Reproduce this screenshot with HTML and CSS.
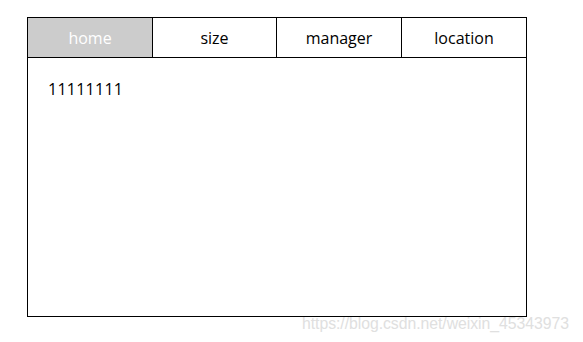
FILE: index.html
```html
<!DOCTYPE html>
<html>
<head>
<meta charset="utf-8">
<link rel="stylesheet" href="styles.css">
</head>
<body>
<div class="box">
  <div class="tabs">
    <div class="tab active">home</div>
    <div class="tab narrow">size</div>
    <div class="tab">manager</div>
    <div class="tab">location</div>
  </div>
  <div class="panel">11111111</div>
</div>
<div class="watermark">https://blog.csdn.net/weixin_45343973</div>
</body>
</html>
```
FILE: styles.css
```css
html, body {
  margin: 0;
  padding: 0;
  background: #fff;
}
body {
  position: relative;
  width: 583px;
  height: 342px;
  font-family: "Open Sans", "Noto Sans", sans-serif;
  color: #000;
}
.box {
  position: relative;
  top: 17px;
  left: 27px;
  width: 498px;
  height: 298px;
  border: 1px solid #000;
  display: flex;
  flex-direction: column;
}
.tabs {
  display: flex;
  height: 39px;
  border-bottom: 1px solid #000;
}
.tab {
  flex: 0 0 124px;
  border-right: 1px solid #000;
  display: flex;
  align-items: center;
  justify-content: center;
  font-size: 16px;
}
.tab.narrow {
  flex-basis: 123px;
}
.tab:last-child {
  border-right: none;
  flex: 1;
}
.tab.active {
  background: #ccc;
  color: #fff;
}
.panel {
  padding: 20px 20px;
  font-size: 16px;
  line-height: 22px;
  letter-spacing: 0.25px;
}
.watermark {
  position: absolute;
  left: 302px;
  top: 315px;
  font-family: "Liberation Sans", Arial, sans-serif;
  font-size: 15.8px;
  color: #e0e0e0;
  letter-spacing: -0.05px;
}
```
